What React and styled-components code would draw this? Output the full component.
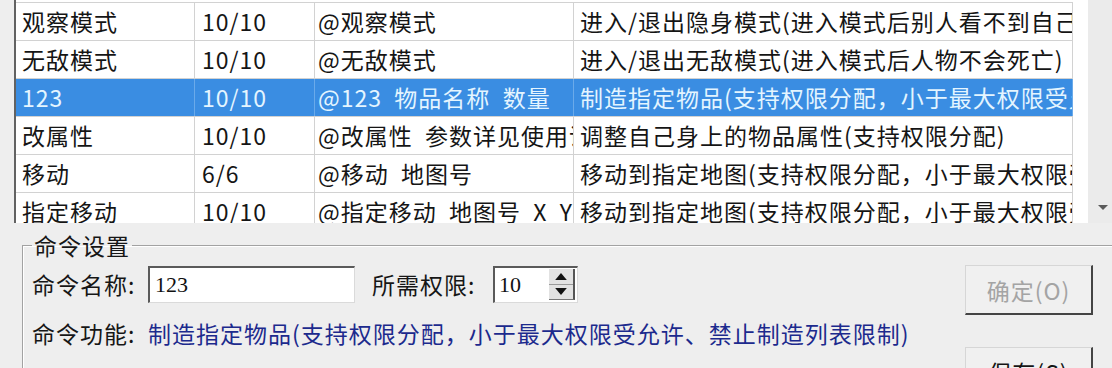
import React from 'react';
import styled, { createGlobalStyle } from 'styled-components';

const GlobalStyle = createGlobalStyle`
  html, body {
    margin: 0;
    padding: 0;
  }
  body {
    width: 1112px;
    height: 368px;
    overflow: hidden;
    background: #eeeeee;
    font-family: "Noto Sans CJK SC", "Noto Sans", sans-serif;
    color: #161616;
  }
`;

// Window layout
const Window = styled.div`
  width: 1112px;
  height: 368px;
  overflow: hidden;
  display: flex;
  flex-direction: column;
`;

const ListArea = styled.div`
  display: flex;
  height: 223px;
  flex-shrink: 0;
  padding-left: 14px;
`;

const ListView = styled.div`
  flex: 1;
  background: #fff;
  border-left: 2px solid #626262;
  overflow: hidden;
  padding-top: 2px;
`;

const Row = styled.div`
  display: grid;
  grid-template-columns: 179px 120px 259px 499px;
  width: 1057px;
  height: 38px;
  box-sizing: border-box;
  border-top: 1px solid #d2d2d2;
  background: ${p => (p.$selected ? '#3a8de2' : 'transparent')};
  color: ${p => (p.$selected ? '#e4f5ff' : '#151515')};
`;

const Cell = styled.div`
  box-sizing: border-box;
  border-right: 1px solid ${p => (p.$selected ? '#6aaaea' : '#d2d2d2')};
  padding-left: ${p => p.$pad || 6}px;
  font-size: 23px;
  letter-spacing: 1px;
  line-height: 37px;
  white-space: pre;
  overflow: hidden;
`;

const ScrollBar = styled.div`
  width: 24px;
  flex-shrink: 0;
  background: #ebebeb;
  display: flex;
  flex-direction: column;
  justify-content: flex-end;
`;

const ScrollArrow = styled.div`
  height: 31px;
  display: flex;
  align-items: center;
  padding-left: 10px;
`;

// Command settings group
const GroupBox = styled.fieldset`
  margin: 9px 0 0 22px;
  width: 1094px;
  min-width: 0;
  box-sizing: border-box;
  padding: 0 22px 0 9px;
  border: 1px solid #a2a2a2;
  box-shadow: inset 1px 1px 0 #fff;
  flex: 1;
`;

const Legend = styled.legend`
  font-size: 23px;
  letter-spacing: 1px;
  line-height: 26px;
  padding: 0 2px;
`;

const GroupBody = styled.div`
  display: flex;
  padding-top: 7px;
`;

const FormColumn = styled.div`
  display: flex;
  flex-direction: column;
`;

const FieldRow = styled.div`
  display: flex;
  align-items: center;
  height: 38px;
  margin-top: ${p => p.$gap || 0}px;
`;

const Label = styled.span`
  width: ${p => p.$w}px;
  margin-left: ${p => p.$ml || 0}px;
  flex-shrink: 0;
  font-size: 23px;
  letter-spacing: 1px;
  line-height: 28px;
  white-space: nowrap;
`;

const Description = styled.span`
  font-size: 23px;
  letter-spacing: 1px;
  line-height: 28px;
  color: #1c2a8d;
  white-space: nowrap;
`;

const TextBox = styled.input`
  width: 207px;
  height: 37px;
  box-sizing: border-box;
  margin: 0;
  padding: 0 0 0 5px;
  border-top: 2px solid #5a5a5a;
  border-left: 2px solid #5a5a5a;
  border-right: 1px solid #dadada;
  border-bottom: 1px solid #dadada;
  background: #fff;
  font-family: "Liberation Serif", serif;
  font-size: 22px;
  color: #111;
  outline: none;
`;

const SpinBox = styled.div`
  width: 85px;
  height: 37px;
  box-sizing: border-box;
  border-top: 2px solid #5a5a5a;
  border-left: 2px solid #5a5a5a;
  border-right: 1px solid #dadada;
  border-bottom: 1px solid #dadada;
  background: #fff;
  display: flex;
  align-items: center;
`;

const SpinValue = styled.span`
  flex: 1;
  padding-left: 4px;
  font-family: "Liberation Serif", serif;
  font-size: 22px;
  color: #111;
`;

const SpinButtons = styled.div`
  width: 26px;
  height: 31px;
  margin-right: 2px;
  box-sizing: border-box;
  border-right: 2px solid #555;
  border-bottom: 1px solid #777;
  background: #e2e2e2;
  display: flex;
  flex-direction: column;
`;

const SpinHalf = styled.div`
  flex: 1;
  display: flex;
  align-items: center;
  justify-content: center;
  border-top: ${p => (p.$lower ? '1px solid #9a9a9a' : 'none')};
`;

const ButtonColumn = styled.div`
  margin-left: auto;
  display: flex;
  flex-direction: column;
  gap: 32px;
`;

const Button = styled.button`
  width: 128px;
  height: 50px;
  box-sizing: border-box;
  padding: 0;
  background: #f0f0f0;
  border-top: 1px solid #d6d6d6;
  border-left: 1px solid #d6d6d6;
  border-right: 2px solid #444;
  border-bottom: 2px solid #444;
  font-family: inherit;
  font-size: 23px;
  letter-spacing: 1px;
  color: ${p => (p.disabled ? '#a4a4a4' : '#151515')};
`;

const rows = [
  ['观察模式', '10/10', '@观察模式', '进入/退出隐身模式(进入模式后别人看不到自己)'],
  ['无敌模式', '10/10', '@无敌模式', '进入/退出无敌模式(进入模式后人物不会死亡)'],
  ['123', '10/10', '@123  物品名称  数量', '制造指定物品(支持权限分配，小于最大权限受允许、禁止制造列表限制)', true],
  ['改属性', '10/10', '@改属性  参数详见使用说明', '调整自己身上的物品属性(支持权限分配)'],
  ['移动', '6/6', '@移动  地图号', '移动到指定地图(支持权限分配，小于最大权限受允许)'],
  ['指定移动', '10/10', '@指定移动  地图号  X  Y', '移动到指定地图(支持权限分配，小于最大权限受允许)'],
];

const Triangle = ({ down, size = 10 }) => (
  <svg width={size} height={size / 2 + 1} viewBox="0 0 10 6">
    <path d={down ? 'M0 0 L10 0 L5 6 Z' : 'M0 6 L10 6 L5 0 Z'} fill="#111" />
  </svg>
);

const App = () => (
  <Window>
    <GlobalStyle />
    <ListArea>
      <ListView>
        {rows.map(([name, level, cmd, desc, selected]) => (
          <Row key={name} $selected={selected}>
            <Cell $selected={selected}>{name}</Cell>
            <Cell $selected={selected} $pad={7}>{level}</Cell>
            <Cell $selected={selected} $pad={3}>{cmd}</Cell>
            <Cell $selected={selected}>{desc}</Cell>
          </Row>
        ))}
      </ListView>
      <ScrollBar>
        <ScrollArrow>
          <svg width="10" height="5" viewBox="0 0 10 5">
            <path d="M0 0 L10 0 L5 5 Z" fill="#5a5a5a" />
          </svg>
        </ScrollArrow>
      </ScrollBar>
    </ListArea>

    <GroupBox>
      <Legend>命令设置</Legend>
      <GroupBody>
        <FormColumn>
          <FieldRow>
            <Label $w={116}>命令名称:</Label>
            <TextBox value="123" readOnly />
            <Label $w={121} $ml={17}>所需权限:</Label>
            <SpinBox>
              <SpinValue>10</SpinValue>
              <SpinButtons>
                <SpinHalf><Triangle size={12} /></SpinHalf>
                <SpinHalf $lower><Triangle down size={12} /></SpinHalf>
              </SpinButtons>
            </SpinBox>
          </FieldRow>
          <FieldRow $gap={11}>
            <Label $w={116}>命令功能:</Label>
            <Description>制造指定物品(支持权限分配，小于最大权限受允许、禁止制造列表限制)</Description>
          </FieldRow>
        </FormColumn>
        <ButtonColumn>
          <Button disabled>确定(O)</Button>
          <Button>保存(S)</Button>
        </ButtonColumn>
      </GroupBody>
    </GroupBox>
  </Window>
);

export default App;
